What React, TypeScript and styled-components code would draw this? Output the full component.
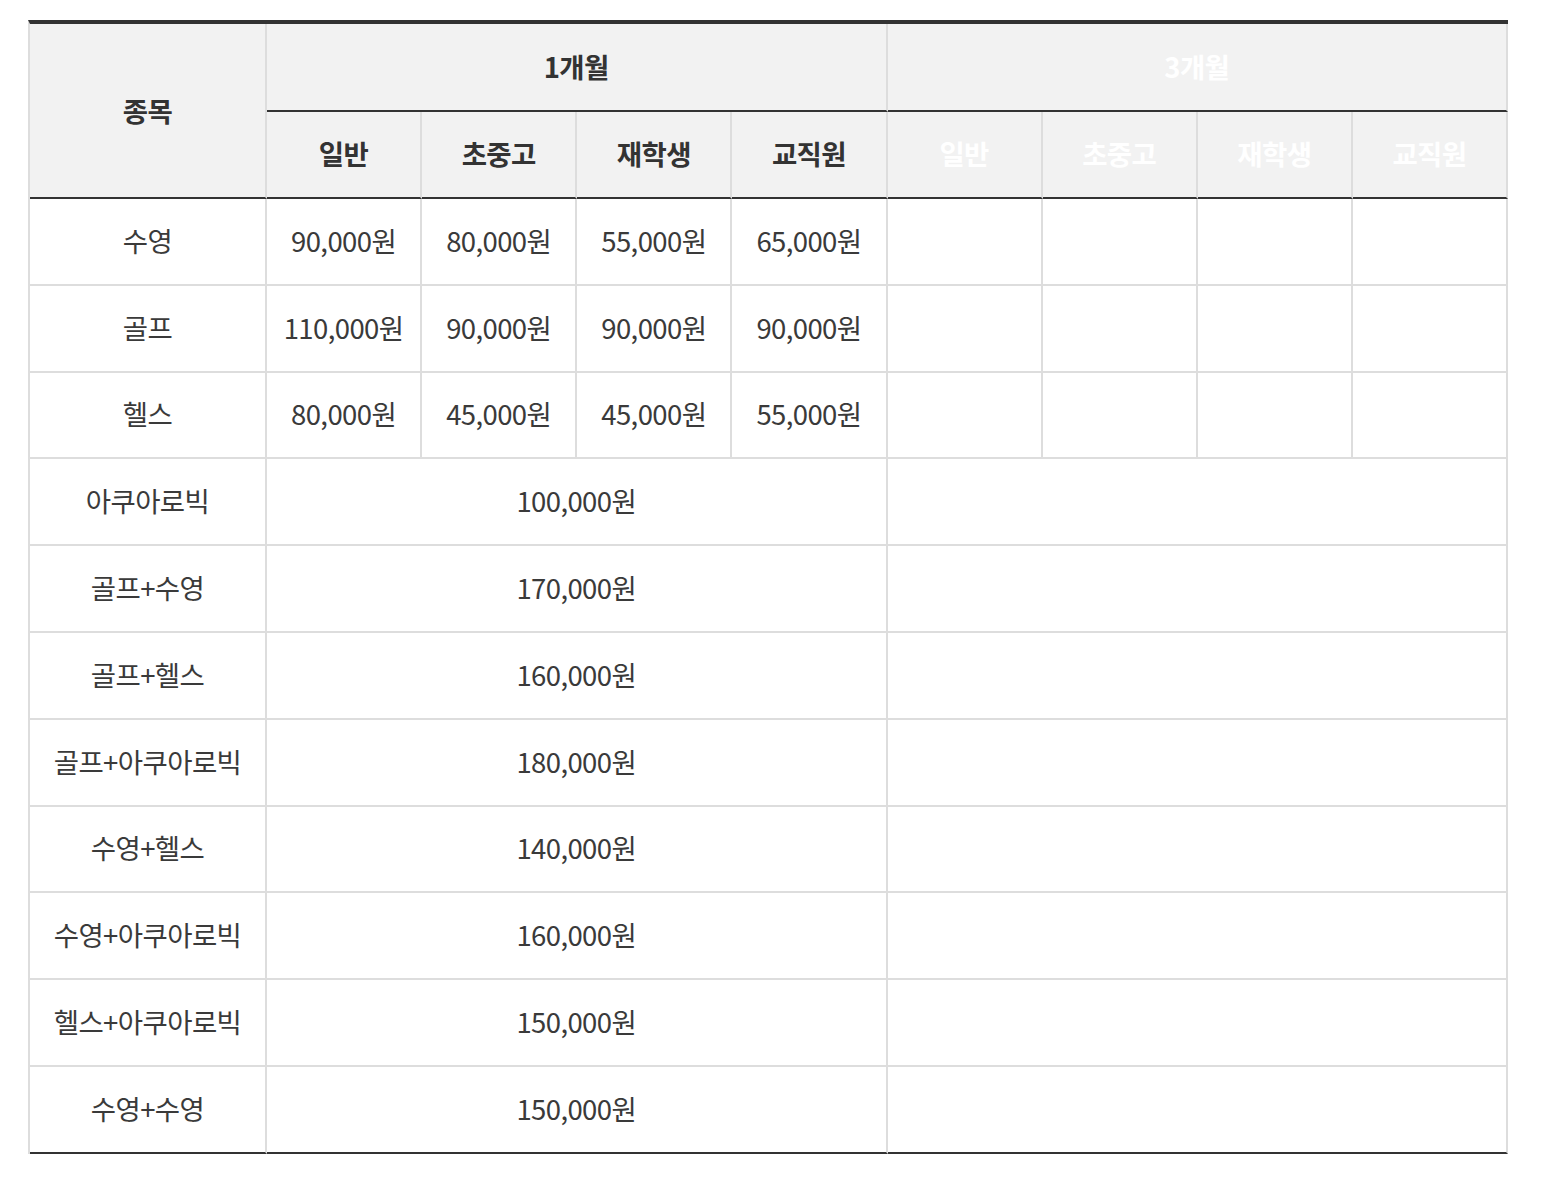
import React from "react";
import styled, { createGlobalStyle } from "styled-components";

const GlobalStyle = createGlobalStyle`
  html, body {
    margin: 0;
    padding: 0;
    background: #ffffff;
  }
  body {
    font-family: "Noto Sans CJK KR", "Noto Sans", sans-serif;
    color: #333;
  }
`;

const Page = styled.div`
  padding: 20px 0 0 28px;
`;

const PriceTable = styled.table`
  width: 1480px;
  table-layout: fixed;
  border-collapse: separate;
  border-spacing: 0;
  border-top: 4px solid #333;
  border-left: 2px solid #dddddd;
  font-family: "Noto Sans CJK KR", "Noto Sans", sans-serif;
  font-size: 27.5px;
  letter-spacing: -0.6px;
`;

const Col = styled.col<{ $w: number }>`
  width: ${(p) => p.$w}px;
`;

const HeadCell = styled.th<{ $muted?: boolean; $tall?: boolean }>`
  box-sizing: border-box;
  height: ${(p) => (p.$tall ? "175px" : "87px")};
  padding: 0 0 2px;
  background: #f2f2f2;
  color: ${(p) => (p.$muted ? "#ffffff" : "#333333")};
  font-weight: 700;
  text-align: center;
  vertical-align: middle;
  border-right: 2px solid #dddddd;
  border-bottom: 2px solid #333333;
`;

const BodyCell = styled.td`
  box-sizing: border-box;
  height: 86.8px;
  padding: 0 0 3px;
  background: #ffffff;
  color: #3a3a3a;
  font-weight: 400;
  text-align: center;
  vertical-align: middle;
  white-space: nowrap;
  border-right: 2px solid #dddddd;
  border-bottom: 2px solid #dddddd;

  tr:last-child > & {
    border-bottom-color: #333333;
  }
`;

const groups = ["일반", "초중고", "재학생", "교직원"];

const singles: { name: string; prices: string[] }[] = [
  { name: "수영", prices: ["90,000원", "80,000원", "55,000원", "65,000원"] },
  { name: "골프", prices: ["110,000원", "90,000원", "90,000원", "90,000원"] },
  { name: "헬스", prices: ["80,000원", "45,000원", "45,000원", "55,000원"] },
];

const combos: { name: string; price: string }[] = [
  { name: "아쿠아로빅", price: "100,000원" },
  { name: "골프+수영", price: "170,000원" },
  { name: "골프+헬스", price: "160,000원" },
  { name: "골프+아쿠아로빅", price: "180,000원" },
  { name: "수영+헬스", price: "140,000원" },
  { name: "수영+아쿠아로빅", price: "160,000원" },
  { name: "헬스+아쿠아로빅", price: "150,000원" },
  { name: "수영+수영", price: "150,000원" },
];

export default function App() {
  return (
    <>
      <GlobalStyle />
      <Page>
        <PriceTable>
          <colgroup>
            <Col $w={237} />
            {Array.from({ length: 8 }).map((_, i) => (
              <Col key={i} $w={155.125} />
            ))}
          </colgroup>
          <thead>
            <tr>
              <HeadCell rowSpan={2} $tall>
                종목
              </HeadCell>
              <HeadCell colSpan={4}>1개월</HeadCell>
              <HeadCell colSpan={4} $muted>
                3개월
              </HeadCell>
            </tr>
            <tr>
              {groups.map((g) => (
                <HeadCell key={"a" + g}>{g}</HeadCell>
              ))}
              {groups.map((g) => (
                <HeadCell key={"b" + g} $muted>
                  {g}
                </HeadCell>
              ))}
            </tr>
          </thead>
          <tbody>
            {singles.map((row) => (
              <tr key={row.name}>
                <BodyCell>{row.name}</BodyCell>
                {row.prices.map((p, i) => (
                  <BodyCell key={i}>{p}</BodyCell>
                ))}
                {groups.map((g) => (
                  <BodyCell key={g} />
                ))}
              </tr>
            ))}
            {combos.map((row) => (
              <tr key={row.name}>
                <BodyCell>{row.name}</BodyCell>
                <BodyCell colSpan={4}>{row.price}</BodyCell>
                <BodyCell colSpan={4} />
              </tr>
            ))}
          </tbody>
        </PriceTable>
      </Page>
    </>
  );
}
